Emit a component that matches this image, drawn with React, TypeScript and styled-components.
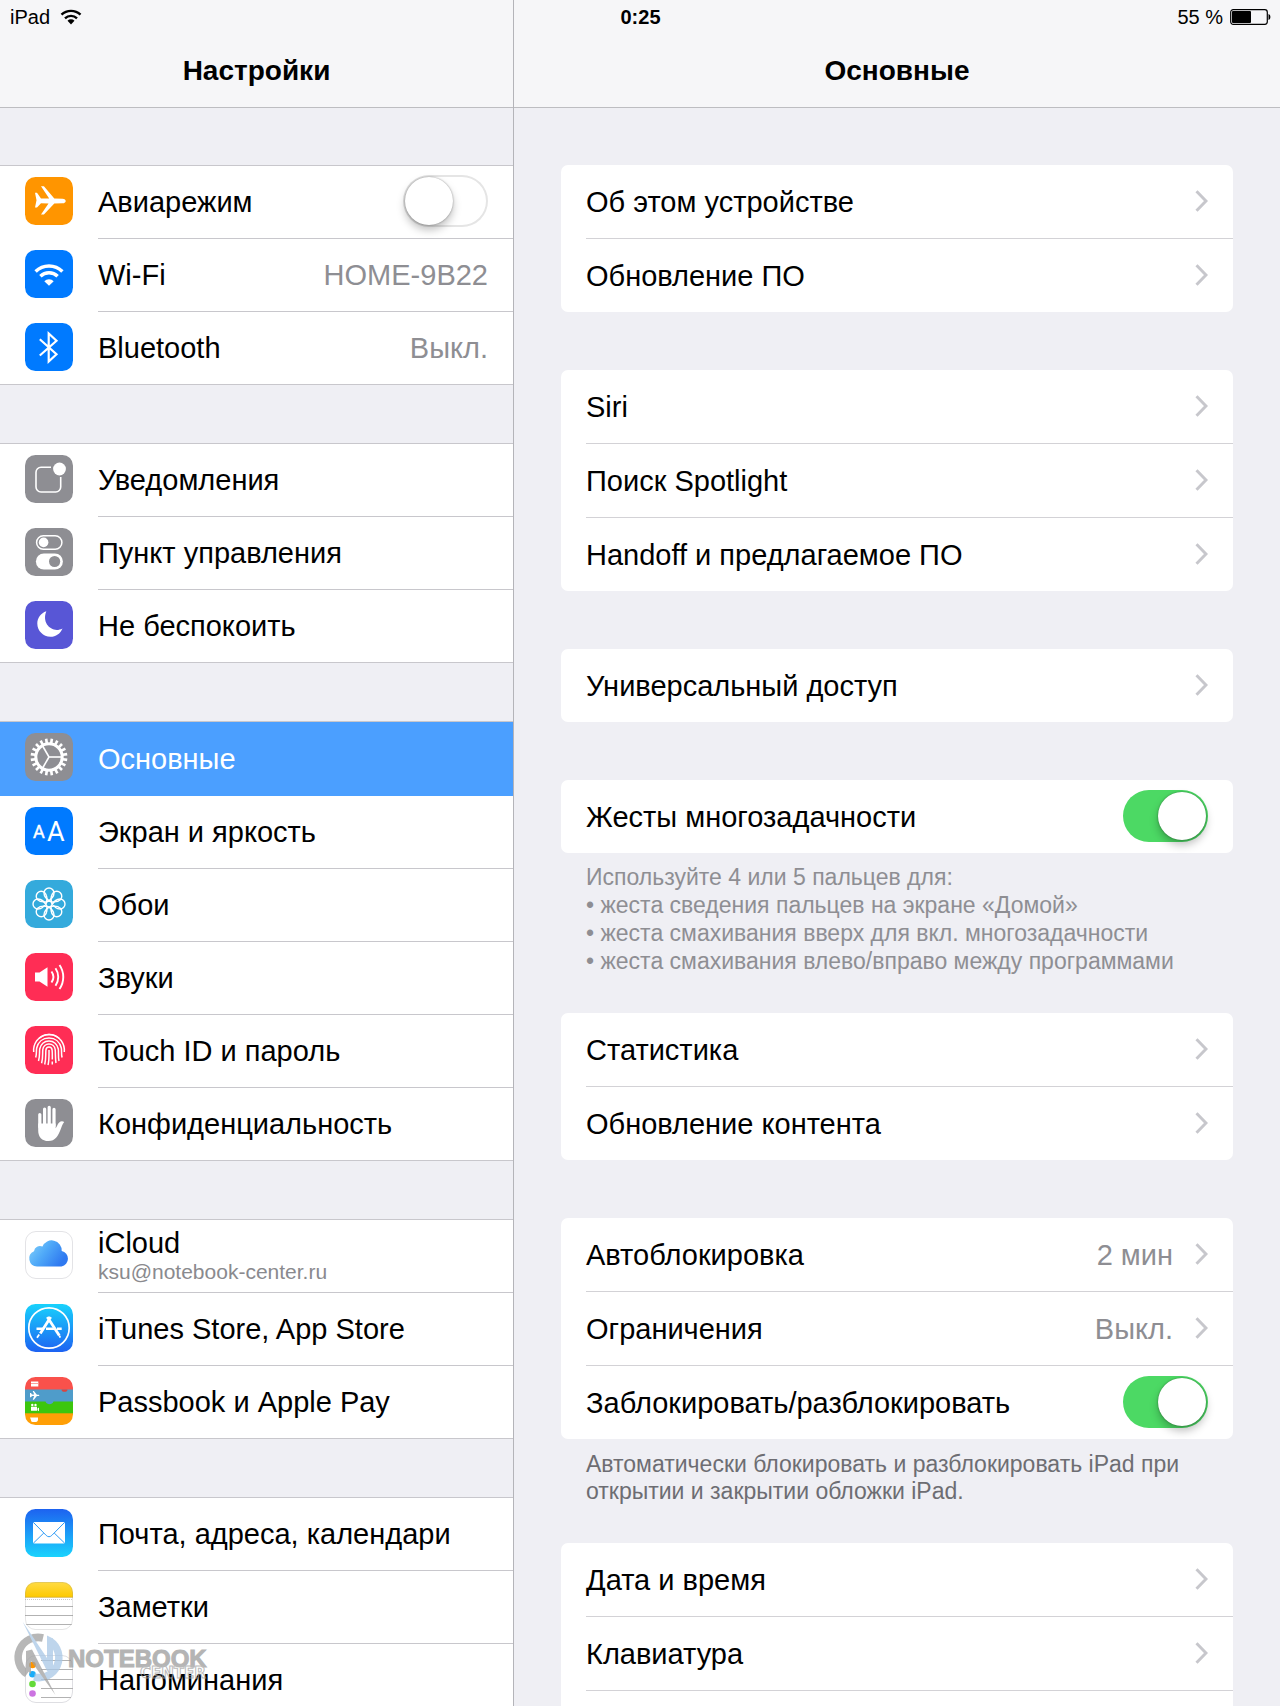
import React, { useState } from 'react';
import styled, { createGlobalStyle, css } from 'styled-components';

const Global = createGlobalStyle`
  *, *::before, *::after { box-sizing: border-box; }
  body {
    margin: 0;
    background: #efeff4;
    color: #000;
    font-family: "Liberation Sans", Arial, sans-serif;
    font-size: 29px;
  }
`;

const Screen = styled.div`
  display: grid;
  grid-template-columns: 514px minmax(0, 1fr);
  grid-template-rows: 34px minmax(0, 1fr);
  height: 100vh;
  overflow: hidden;
`;

const StatusBar = styled.header`
  grid-area: 1 / 1 / 2 / 3;
  z-index: 1;
  display: grid;
  grid-template-columns: 1fr auto 1fr;
  align-items: center;
  padding: 0 9px 0 10px;
  font-size: 20px;
`;

const StatusSide = styled.span<{ $end?: boolean }>`
  display: flex;
  align-items: center;
  gap: ${p => (p.$end ? 7 : 10)}px;
  justify-content: ${p => (p.$end ? 'flex-end' : 'flex-start')};
`;

const Pane = styled.section<{ $side?: boolean }>`
  grid-row: 1 / 3;
  grid-column: ${p => (p.$side ? 1 : 2)};
  display: flex;
  flex-direction: column;
  min-height: 0;
  border-right: ${p => (p.$side ? '1px solid #b4b4b9' : 'none')};
`;

const NavBar = styled.div`
  flex: none;
  height: 108px;
  padding-top: 34px;
  display: flex;
  align-items: center;
  justify-content: center;
  background: #f6f6f8;
  border-bottom: 1px solid #bdbdc1;
`;

const Title = styled.h1`
  margin: 0;
  font-size: 28px;
  line-height: 36px;
  font-weight: 700;
`;

const Scroll = styled.div<{ $inset?: boolean }>`
  flex: 1;
  min-height: 0;
  overflow-y: auto;
  scrollbar-width: none;
  display: flex;
  flex-direction: column;
  padding: ${p => (p.$inset ? '57px 47px 0' : '57px 0 0')};
`;

const Group = styled.ul`
  flex: none;
  list-style: none;
  margin: 0 0 58px;
  padding: 0;
  background: #fff;
  border-top: 1px solid #c8c7cc;
`;

const Row = styled.li<{ $selected?: boolean }>`
  display: flex;
  height: ${p => (p.$selected ? 74 : 73)}px;
  padding-left: 25px;
  ${p => p.$selected && css`
    background: #4b9fff;
    color: #fff;
  `}
  &:last-child { border-bottom: 1px solid #c8c7cc; }
  &:last-child > * { border-bottom: 0; }
`;

const IconSlot = styled.span`
  flex: none;
  width: 73px;
  padding-top: 11px;
  svg { display: block; }
`;

const rowBody = css`
  flex: 1;
  min-width: 0;
  display: flex;
  align-items: center;
  justify-content: space-between;
  border: 0;
  border-bottom: 1px solid #c8c7cc;
  padding: 0 25px 2px 0;
  background: none;
  color: inherit;
  font: inherit;
  text-align: left;
  text-decoration: none;
`;

const RowLink = styled.a<{ $selected?: boolean }>`
  ${rowBody}
  ${p => p.$selected && css`border-bottom-color: transparent;`}
`;

const RowLabel = styled.label`
  ${rowBody}
`;

const Text = styled.span`
  display: flex;
  flex-direction: column;
  padding-top: 2px;
  line-height: 32px;
  white-space: nowrap;
`;

const Sub = styled.span`
  color: #8a8a8e;
  font-size: 21px;
  line-height: 26px;
`;

const Trailing = styled.span`
  display: flex;
  align-items: center;
  gap: 22px;
  color: #8e8e93;
`;

const Card = styled.ul<{ $open?: boolean }>`
  flex: ${p => (p.$open ? '1 0 auto' : 'none')};
  list-style: none;
  margin: 0;
  padding: 0 0 0 25px;
  background: #fff;
  border-radius: ${p => (p.$open ? '7px 7px 0 0' : '7px')};
`;

const CardRow = styled.li<{ $line?: boolean }>`
  display: flex;
  height: ${p => (p.$line ? 74 : 73)}px;
  & > * { border-bottom: ${p => (p.$line ? '1px solid #d3d2d6' : '0')}; }
`;

const Block = styled.div<{ $open?: boolean }>`
  flex: ${p => (p.$open ? '1 0 auto' : 'none')};
  display: flex;
  flex-direction: column;
  margin-bottom: ${p => (p.$open ? 0 : 58)}px;
`;

const Note = styled.p<{ $dark?: boolean }>`
  margin: 0 0 -20px;
  padding: ${p => (p.$dark ? 12 : 10)}px 25px 0;
  white-space: pre-line;
  font-size: 23px;
  line-height: ${p => (p.$dark ? 27 : 28)}px;
  color: ${p => (p.$dark ? '#6d6d72' : '#8e8e93')};
`;

const Switch = styled.input`
  appearance: none;
  flex: none;
  margin: 0;
  width: 85px;
  height: 52px;
  padding: 2px;
  border-radius: 26px;
  background: #fff;
  box-shadow: inset 0 0 0 2px #e5e5e5;
  display: flex;
  &::before {
    content: "";
    width: 48px;
    height: 48px;
    border-radius: 50%;
    background: #fff;
    box-shadow: 0 0 2px rgba(0, 0, 0, 0.4), 0 5px 9px rgba(0, 0, 0, 0.25);
  }
  &:checked {
    background: #4cd964;
    box-shadow: none;
    justify-content: flex-end;
  }
`;

const Watermark = styled.div`
  position: absolute;
  left: 12px;
  bottom: 4px;
  pointer-events: none;
  opacity: 0.75;
  svg { display: block; }
`;

const Chevron = () => (
  <svg width="13" height="22" viewBox="0 0 13 22" fill="none" stroke="#c7c7cc" strokeWidth="3" aria-hidden="true">
    <path d="M1.5 1.2 11 11 1.5 20.8" />
  </svg>
);

const Tile = ({ fill, children }: { fill: string; children?: React.ReactNode }) => (
  <svg width="48" height="48" viewBox="0 0 48 48" aria-hidden="true">
    <rect width="48" height="48" rx="10.5" fill={fill} />
    {children}
  </svg>
);

const polar = (r: number, deg: number, c = 24) => {
  const a = (deg * Math.PI) / 180;
  return [c + r * Math.cos(a), c + r * Math.sin(a)];
};

const PlaneIcon = () => (
  <Tile fill="#ff9500">
    <path
      fill="#fff"
      d="M10 15.8h2l4 5.6 8.2.2L16 9.3h2.9l10.4 12.3 8.2.1c4.3.1 4.3 4.5 0 4.6l-8.2.1L18.9 37.5H16l7.5-11.1-7.5-.2-4 4.3h-2l1.5-7.2z"
    />
  </Tile>
);

const WifiIcon = () => (
  <Tile fill="#007aff">
    <g fill="none" stroke="#fff" strokeWidth="3.4">
      <path d="M10.6 21.5a19 19 0 0 1 26.8 0" />
      <path d="M15.4 26.3a12.2 12.2 0 0 1 17.2 0" />
    </g>
    <path fill="#fff" d="M19.3 31.2a6.6 6.6 0 0 1 9.4 0L24 35.8z" />
  </Tile>
);

const BluetoothIcon = () => (
  <Tile fill="#007aff">
    <path d="m14.8 16.2 16.7 15-7.800 7.300V10.500l7.800 7.200-16.700 14.800" fill="none" stroke="#fff" strokeWidth="2.2" />
  </Tile>
);

const BellIcon = () => (
  <Tile fill="#8e8e93">
    <path
      d="M26 12.3H16a5 5 0 0 0-5 5V32a5 5 0 0 0 5 5h14.7a5 5 0 0 0 5-5V22"
      fill="none" stroke="#fff" strokeWidth="1.6"
    />
    <circle cx="34.5" cy="14" r="6.4" fill="#fff" />
  </Tile>
);

const ControlIcon = () => (
  <Tile fill="#8e8e93">
    <rect x="11.6" y="7.7" width="25.3" height="13.5" rx="6.7" fill="none" stroke="#fff" strokeWidth="1.5" />
    <circle cx="18.6" cy="14.4" r="4.8" fill="#fff" />
    <rect x="10.9" y="25.5" width="27" height="16" rx="8" fill="#fff" />
    <circle cx="29.6" cy="33.5" r="5.6" fill="#8e8e93" />
  </Tile>
);

const MoonIcon = () => (
  <Tile fill="#5856d6">
    <path fill="#fff" d="M21.3 10.3c-5.5 2-9 6.6-9 12.3 0 7.3 5.9 13.2 13.2 13.2 5.3 0 9.900-3.300 12-8.400-9.800 5.300-21.300-4.400-16.200-17.100z" />
  </Tile>
);

const GearIcon = () => (
  <Tile fill="#8e8e93">
    <g fill="none" stroke="#fff">
      <circle cx="24" cy="24" r="13.2" strokeWidth="3" />
      {Array.from({ length: 20 }, (_, i) => {
        const [x1, y1] = polar(14, i * 18 + 9);
        const [x2, y2] = polar(18.4, i * 18 + 9);
        return <line key={i} x1={x1} y1={y1} x2={x2} y2={y2} strokeWidth="2.6" />;
      })}
      {[0, 120, 240].map(d => {
        const [x, y] = polar(13, d);
        return <line key={d} x1="24" y1="24" x2={x} y2={y} strokeWidth="1.6" />;
      })}
    </g>
  </Tile>
);

const DisplayIcon = () => (
  <Tile fill="#007aff">
    <g fill="#fff" fontFamily="Roboto, 'Liberation Sans', sans-serif">
      <text x="8" y="31" fontSize="18" stroke="#fff" strokeWidth="0.4">A</text>
      <text x="22" y="34" fontSize="27">A</text>
    </g>
  </Tile>
);

const FlowerIcon = () => (
  <Tile fill="#34aadc">
    <g fill="none" stroke="#fff" strokeWidth="1.4">
      {[0, 45, 90, 135, 180, 225, 270, 315].map(d => (
        <path
          key={d}
          transform={`rotate(${d} 24 24)`}
          d="M24 8a5 5 0 0 1 5 5c0 3.600-1.800 6-7 8.800M24 8a5 5 0 0 0-5 5c0 3.600 1.800 6 7 8.800"
        />
      ))}
    </g>
  </Tile>
);

const SoundIcon = () => (
  <Tile fill="#ff2d55">
    <path fill="#fff" d="M10 19.6h4.5l8-5.4v19.6l-8-5.4H10z" />
    <g fill="none" stroke="#fff" strokeWidth="1.9">
      <path d="M26.5 18.5a9.500 9.500 0 0 1 0 11" />
      <path d="M30.5 15.2a15.500 15.500 0 0 1 0 17.600" />
      <path d="M34.5 12a21 21 0 0 1 0 24" />
    </g>
  </Tile>
);

const TouchIcon = () => (
  <Tile fill="#ff2d55">
    <g fill="none" stroke="#fff" strokeWidth="1.5">
      <path d="M14 12.5C20 7 28.5 7 34.3 12.5" />
      <path d="M8.7 26c-.6-4.3.8-8 3-11.3a15.200 15.200 0 0 1 24.600 0c2.300 3.300 3.500 7 3 11.300" />
      <path d="M10.7 31.5c1.200-4 .4-6.500 1-9.500 1.400-6 6-10 12.300-10s10.900 4 12.300 10c.6 3-.2 6.500.8 9.500" />
      <path d="M13.500 35c1.600-5 .7-8.500 1.200-12 .8-4.600 4.500-8 9.300-8s8.500 3.400 9.300 8c.5 3.500-.3 7.500.7 12" />
      <path d="M16.600 37.300c1.500-5.300.8-9.800 1.200-13.800.4-3.100 3-5.500 6.200-5.500s5.800 2.400 6.200 5.500c.4 4 0 9 .8 13.500" />
      <path d="M19.700 38.500c1.500-5 .8-9.500 1.200-14.500.2-1.700 1.500-3 3.100-3s2.900 1.300 3.100 3c.4 4 .2 6.500.2 9.500M27.300 35.500v3" />
      <path d="M23 39c1.300-5 1-10 1-15" />
    </g>
  </Tile>
);

const HandIcon = () => (
  <Tile fill="#8e8e93">
    <g fill="none" stroke="#fff" strokeWidth="3.2" strokeLinecap="round">
      <path d="M14.800 15.500V28M19.600 10V26M24.200 8.300V26M29 10.300V27" />
    </g>
    <path
      fill="#fff"
      d="M13.200 24.500h17.400v4.700c1.300-1.500 1.900-4.300 3.600-5.800 1.400-1.200 3.300-1.500 5-.4-1.900 1.900-2.500 5.200-4.200 8.900-2 4.600-4.600 10.100-11.500 10.100-6.600 0-10.300-4.200-10.300-10.600z"
    />
  </Tile>
);

const CloudIcon = () => (
  <svg width="48" height="48" viewBox="0 0 48 48" aria-hidden="true">
    <defs>
      <linearGradient id="cloud" x1="0" y1="0" x2="1" y2="0.5">
        <stop offset="0" stopColor="#86d4fb" />
        <stop offset="0.5" stopColor="#4fa9f8" />
        <stop offset="1" stopColor="#2f79f0" />
      </linearGradient>
    </defs>
    <rect x="0.5" y="0.5" width="47" height="47" rx="10.5" fill="#fff" stroke="#e3e3e6" />
    <path fill="url(#cloud)" d="M12 35.500a8 8 0 0 1-3-15.300 6 6 0 0 1 8.500-4.700A10 10 0 0 1 36.700 20 7.900 7.900 0 0 1 36.500 35.500z" />
  </svg>
);

const StoreIcon = () => (
  <Tile fill="url(#store)">
    <defs>
      <linearGradient id="store" x1="0" y1="0" x2="0" y2="1">
        <stop offset="0" stopColor="#18d2fc" />
        <stop offset="1" stopColor="#1d62f2" />
      </linearGradient>
    </defs>
    <g fill="none" stroke="#fff">
      <circle cx="24" cy="24" r="20.2" strokeWidth="1.7" />
      <path d="M11.500 24.800h6.500M21 24.800h8M32 24.800h4.700" strokeWidth="2.4" />
      <path d="M25.700 13 15.300 29.500M22.300 13l12 18.500" strokeWidth="2.8" />
      <path d="m14.200 30.500-2.200 3.300M34.300 31.500l1 2.200" strokeWidth="1.8" />
    </g>
  </Tile>
);

const PassbookIcon = () => (
  <svg width="48" height="48" viewBox="0 0 48 48" aria-hidden="true">
    <clipPath id="pass"><rect width="48" height="48" rx="10.5" /></clipPath>
    <g clipPath="url(#pass)">
      <rect width="48" height="13" fill="#f9514b" />
      <rect y="12.5" width="48" height="16" fill="#4f9cca" />
      <path fill="#d8453f" d="M36.500 12.500a3 2.300 0 0 0 6 0z" />
      <path fill="#3cc60d" d="M0 24.500h20.500c1 3.500 7 3.500 8 0H48V37H0z" />
      <rect y="36.3" width="48" height="12" fill="#ff9f06" />
      <rect x="6" y="4.5" width="7.3" height="5" fill="#fff" />
      <path d="M6 6.500h7.300" stroke="#f9a09c" />
      <path fill="#fff" d="M5 16h1l1 1.600h2.200L7.700 14h1.200l3 3.700h1.700c1 0 1 1.300 0 1.300h-1.700l-3 3.700H7.700L9.200 19H7l-1 1.200H5z" />
      <path fill="#fff" d="M6 29.800h6v4H6zM12.500 31.500l1.500-1v3.800l-1.500-1z" />
      <circle cx="7.3" cy="28" r="1.2" fill="#fff" />
      <circle cx="10.5" cy="28" r="1.2" fill="#fff" />
      <path fill="#fff" d="M5 40.500h8v2c0 1.500-1 2.500-2 2.500H7.500c-1 0-1.500-1-1.500-2z" />
    </g>
  </svg>
);

const MailIcon = () => (
  <Tile fill="url(#mail)">
    <defs>
      <linearGradient id="mail" x1="0" y1="0" x2="0" y2="1">
        <stop offset="0" stopColor="#1d62f0" />
        <stop offset="1" stopColor="#1ad3fd" />
      </linearGradient>
    </defs>
    <rect x="8" y="13" width="32" height="21.5" rx="1.5" fill="#fff" />
    <path d="m8.500 13.500 12.700 12.900c1.800 1.800 3.800 1.800 5.600 0L39.500 13.500M8.500 34l10.300-10M39.500 34 29.200 24" fill="none" stroke="#2e9bf6" />
  </Tile>
);

const NotesIcon = () => (
  <svg width="48" height="48" viewBox="0 0 48 48" aria-hidden="true">
    <defs>
      <clipPath id="notes"><rect width="48" height="48" rx="10.5" /></clipPath>
      <linearGradient id="pad" x1="0" y1="0" x2="0" y2="1">
        <stop offset="0" stopColor="#ffdb45" />
        <stop offset="1" stopColor="#fdc900" />
      </linearGradient>
    </defs>
    <g clipPath="url(#notes)">
      <rect width="48" height="48" fill="#fff" />
      <rect width="48" height="15" fill="url(#pad)" />
      <path d="M0 15.300h48" stroke="#d2ab2c" strokeWidth="0.8" />
      <path d="M0 17.500h48" stroke="#bbb" strokeDasharray="1 1" strokeWidth="0.8" />
      <path d="M0 24.500h48M0 33.500h48M0 42.500h48" stroke="#b2b2b2" />
    </g>
    <rect x="0.5" y="0.5" width="47" height="47" rx="10" fill="none" stroke="#999" strokeOpacity="0.25" />
  </svg>
);

const RemindersIcon = () => (
  <svg width="48" height="48" viewBox="0 0 48 48" aria-hidden="true">
    <rect x="0.5" y="0.5" width="47" height="47" rx="10.5" fill="#fff" stroke="#dedee2" />
    <path d="M16 5.500h30M16 14.500h32M16 24.500h32M16 33.500h32M16 42.500h30" stroke="#b2b2b2" />
    <circle cx="7.5" cy="10" r="3.3" fill="#ff9500" />
    <circle cx="7.5" cy="19.2" r="3.3" fill="#1badf8" />
    <circle cx="7.5" cy="29" r="3.3" fill="#63da38" />
    <circle cx="7.5" cy="38.5" r="3.3" fill="#cc73e1" />
  </svg>
);

type Item = {
  icon: React.ReactNode;
  text: string;
  sub?: string;
  value?: string;
  toggle?: boolean;
  selected?: boolean;
};

const sidebar: Item[][] = [
  [
    { icon: <PlaneIcon />, text: 'Авиарежим', toggle: true },
    { icon: <WifiIcon />, text: 'Wi-Fi', value: 'HOME-9B22' },
    { icon: <BluetoothIcon />, text: 'Bluetooth', value: 'Выкл.' },
  ],
  [
    { icon: <BellIcon />, text: 'Уведомления' },
    { icon: <ControlIcon />, text: 'Пункт управления' },
    { icon: <MoonIcon />, text: 'Не беспокоить' },
  ],
  [
    { icon: <GearIcon />, text: 'Основные', selected: true },
    { icon: <DisplayIcon />, text: 'Экран и яркость' },
    { icon: <FlowerIcon />, text: 'Обои' },
    { icon: <SoundIcon />, text: 'Звуки' },
    { icon: <TouchIcon />, text: 'Touch ID и пароль' },
    { icon: <HandIcon />, text: 'Конфиденциальность' },
  ],
  [
    { icon: <CloudIcon />, text: 'iCloud', sub: 'ksu@notebook-center.ru' },
    { icon: <StoreIcon />, text: 'iTunes Store, App Store' },
    { icon: <PassbookIcon />, text: 'Passbook и Apple Pay' },
  ],
  [
    { icon: <MailIcon />, text: 'Почта, адреса, календари' },
    { icon: <NotesIcon />, text: 'Заметки' },
    { icon: <RemindersIcon />, text: 'Напоминания' },
  ],
];

type Entry = { text: string; value?: string; toggle?: boolean };
type Section = { rows: Entry[]; note?: string; dark?: boolean; open?: boolean };

const general: Section[] = [
  { rows: [{ text: 'Об этом устройстве' }, { text: 'Обновление ПО' }] },
  { rows: [{ text: 'Siri' }, { text: 'Поиск Spotlight' }, { text: 'Handoff и предлагаемое ПО' }] },
  { rows: [{ text: 'Универсальный доступ' }] },
  {
    rows: [{ text: 'Жесты многозадачности', toggle: true }],
    note:
      'Используйте 4 или 5 пальцев для:\n• жеста сведения пальцев на экране «Домой»\n• жеста смахивания вверх для вкл. многозадачности\n• жеста смахивания влево/вправо между программами',
  },
  { rows: [{ text: 'Статистика' }, { text: 'Обновление контента' }] },
  {
    rows: [
      { text: 'Автоблокировка', value: '2 мин' },
      { text: 'Ограничения', value: 'Выкл.' },
      { text: 'Заблокировать/разблокировать', toggle: true },
    ],
    note: 'Автоматически блокировать и разблокировать iPad при открытии и закрытии обложки iPad.',
    dark: true,
  },
  { rows: [{ text: 'Дата и время' }, { text: 'Клавиатура' }], open: true },
];

const Toggle = ({ initial }: { initial: boolean }) => {
  const [on, setOn] = useState(initial);
  return <Switch type="checkbox" role="switch" checked={on} onChange={e => setOn(e.target.checked)} />;
};

export default function App() {
  return (
    <>
      <Global />
      <Screen>
        <StatusBar>
          <StatusSide>
            iPad
            <svg width="22" height="16" viewBox="0 0 22 16" aria-hidden="true">
              <g fill="none" stroke="#000" strokeWidth="2.4">
                <path d="M1.500 5.700a13.600 13.600 0 0 1 19 0" />
                <path d="M5 9.300a8.600 8.600 0 0 1 12 0" />
              </g>
              <path d="M7.500 11.800a5 5 0 0 1 7 0L11 15.400z" />
            </svg>
          </StatusSide>
          <b>0:25</b>
          <StatusSide $end>
            55 %
            <svg width="41" height="16" viewBox="0 0 41 16" aria-hidden="true">
              <rect x="0.7" y="0.7" width="36.6" height="14.6" rx="2.5" fill="none" stroke="#000" strokeWidth="1.2" />
              <rect x="2" y="2" width="19" height="12" rx="1" />
              <path d="M38.500 5c2.500.6 2.500 5.400 0 6z" />
            </svg>
          </StatusSide>
        </StatusBar>

        <Pane $side>
          <NavBar><Title>Настройки</Title></NavBar>
          <Scroll as="nav" aria-label="Настройки">
            {sidebar.map((group, g) => (
              <Group key={g}>
                {group.map(item => (
                  <Row key={item.text} $selected={item.selected}>
                    <IconSlot>{item.icon}</IconSlot>
                    {item.toggle ? (
                      <RowLabel>
                        <Text>{item.text}</Text>
                        <Toggle initial={false} />
                      </RowLabel>
                    ) : (
                      <RowLink href="#" $selected={item.selected}>
                        <Text>
                          {item.text}
                          {item.sub && <Sub>{item.sub}</Sub>}
                        </Text>
                        {item.value && <Trailing><Text>{item.value}</Text></Trailing>}
                      </RowLink>
                    )}
                  </Row>
                ))}
              </Group>
            ))}
          </Scroll>
        </Pane>

        <Pane>
          <NavBar><Title>Основные</Title></NavBar>
          <Scroll as="main" $inset>
            {general.map((section, s) => (
              <Block key={s} $open={section.open}>
                <Card $open={section.open}>
                  {section.rows.map((row, i) => (
                    <CardRow key={row.text} $line={section.open || i < section.rows.length - 1}>
                      {row.toggle ? (
                        <RowLabel>
                          <Text>{row.text}</Text>
                          <Toggle initial />
                        </RowLabel>
                      ) : (
                        <RowLink href="#">
                          <Text>{row.text}</Text>
                          <Trailing>
                            {row.value && <Text>{row.value}</Text>}
                            <Chevron />
                          </Trailing>
                        </RowLink>
                      )}
                    </CardRow>
                  ))}
                </Card>
                {section.note && <Note $dark={section.dark}>{section.note}</Note>}
              </Block>
            ))}
          </Scroll>
        </Pane>
      </Screen>

      <Watermark>
        <svg width="202" height="82" viewBox="0 0 202 82" role="img" aria-label="Notebook Center">
          <path d="M15 54A20 20 0 0 1 31 18" fill="none" stroke="#a0a0a0" strokeWidth="7.5" />
          <path d="M38 21A20 20 0 0 1 22 57" fill="none" stroke="#a9c8e6" strokeWidth="7.5" />
          <path d="M10.700 1.700 35 38V15.500l6 3V51h-6z" fill="#a9c8e6" />
          <path d="M14 31l6-1.500L43.500 75 19 41v13l-5-5z" fill="#a0a0a0" />
          <text x="56" y="47" fontFamily="Liberation Sans, sans-serif" fontWeight="700" fontSize="24" fill="#9b9b9b" stroke="#9b9b9b">NOTEBOOK</text>
          <text x="128" y="58" fontFamily="DejaVu Sans, sans-serif" fontWeight="700" fontSize="15" fill="none" stroke="#a4a4a4">CENTER</text>
        </svg>
      </Watermark>
    </>
  );
}
